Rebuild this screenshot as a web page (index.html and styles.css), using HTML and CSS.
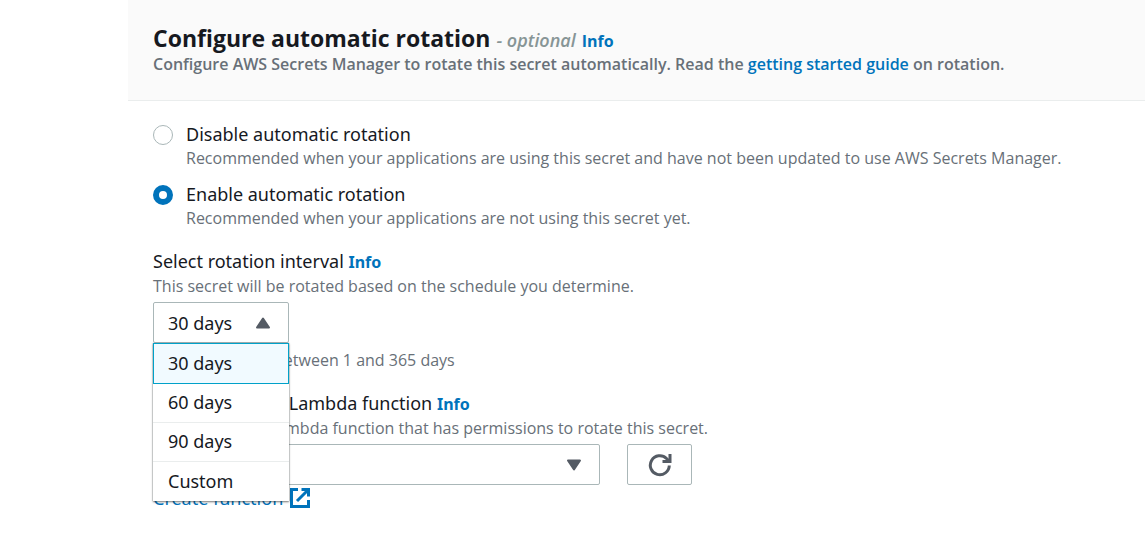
FILE: index.html
```html
<!DOCTYPE html>
<html lang="en">
<head>
<meta charset="utf-8">
<meta name="viewport" content="width=device-width, initial-scale=1">
<title>Configure automatic rotation</title>
<link rel="stylesheet" href="styles.css">
</head>
<body>
<main class="panel">
  <header class="panel-header">
    <h1 class="title">Configure automatic rotation <span class="optional">- optional</span> <a class="info" href="#">Info</a></h1>
    <p class="subtitle">Configure AWS Secrets Manager to rotate this secret automatically. Read the <a href="#">getting started guide</a> on rotation.</p>
  </header>
  <form class="panel-body">
    <div class="radios">
      <div class="choice">
        <input class="radio" type="radio" name="rotation" id="disable">
        <div>
          <label class="label" for="disable">Disable automatic rotation</label>
          <p class="hint">Recommended when your applications are using this secret and have not been updated to use AWS Secrets Manager.</p>
        </div>
      </div>
      <div class="choice">
        <input class="radio" type="radio" name="rotation" id="enable" checked>
        <div>
          <label class="label" for="enable">Enable automatic rotation</label>
          <p class="hint">Recommended when your applications are not using this secret yet.</p>
        </div>
      </div>
    </div>

    <div class="field">
      <div class="label"><label for="interval">Select rotation interval</label> <a class="info" href="#">Info</a></div>
      <p class="hint">This secret will be rotated based on the schedule you determine.</p>
      <div class="control interval">
        <select class="select" id="interval"><option>30 days</option><option>60 days</option><option>90 days</option><option>Custom</option></select>
        <svg class="caret" viewBox="0 0 16 12" aria-hidden="true"><path d="M8 1.500L14 10.500H2Z"/></svg>
        <div class="menu">
          <button class="option selected" type="button">30 days</button>
          <button class="option" type="button">60 days</button>
          <button class="option" type="button">90 days</button>
          <button class="option" type="button">Custom</button>
        </div>
      </div>
      <p class="hint">Enter a number between 1 and 365 days</p>
    </div>

    <div class="field">
      <div class="label"><label for="lambda">Choose an AWS Lambda function</label> <a class="info" href="#">Info</a></div>
      <p class="hint">Select the AWS Lambda function that has permissions to rotate this secret.</p>
      <div class="row">
        <div class="control lambda">
          <select class="select" id="lambda"><option></option></select>
          <svg class="caret" viewBox="0 0 16 12" aria-hidden="true"><path d="M8 10.500L14 1.500H2Z"/></svg>
        </div>
        <button class="refresh" type="button" aria-label="Refresh functions">
          <svg viewBox="0 0 24 24" aria-hidden="true"><path d="M21.300 12.500A9.500 9.500 0 1 1 18.500 5.500L21 8"/><path d="M22 1V8.500H14.500"/></svg>
        </button>
      </div>
      <a class="create" href="#">Create function
        <svg viewBox="0 0 20 20" aria-hidden="true"><path d="M8 1.500H1.500V18.500H18.500V12"/><path d="M11.500 1.500H18.500V8.500M18 2L7 13"/></svg>
      </a>
    </div>
  </form>
</main>
</body>
</html>
```
FILE: styles.css
```css
* { box-sizing: border-box; }
body {
  margin: 0;
  background: #fff;
  color: #16191f;
  font-family: "Open Sans", "Noto Sans", sans-serif;
  font-size: 16px;
  line-height: 22px;
}
h1, p { margin: 0; }
a { color: #0073bb; text-decoration: none; }
.panel { margin-left: 128px; }
.panel-header {
  padding: 24px 25px 25px;
  background: #fafafa;
  border-bottom: 1px solid #eaeded;
}
.title { font-size: 23px; line-height: 28px; font-weight: 700; }
.optional { color: #879596; font-size: 18px; font-style: italic; font-weight: 600; }
.info { font-size: 16px; font-weight: 700; }
.subtitle { margin-top: -2px; color: #687078; font-size: 16px; font-weight: 600; }
.panel-body {
  display: flex;
  flex-direction: column;
  gap: 19px;
  padding: 20px 25px;
}
.radios { display: flex; flex-direction: column; gap: 12px; }
.choice { display: flex; align-items: flex-start; gap: 13px; }
.radio {
  appearance: none;
  flex: none;
  width: 20px;
  height: 20px;
  margin: 4px 0 0;
  border: 1px solid #aab7b8;
  border-radius: 50%;
  background: #fff;
}
.radio:checked { border: 6px solid #0073bb; }
.label { display: block; font-family: "Noto Sans", sans-serif; font-size: 18px; line-height: 26px; }
.hint { color: #687078; }
.field { display: flex; flex-direction: column; }
.control { position: relative; margin: 5px 0 6px; }
.interval { width: 136px; }
.lambda { width: 447px; margin-bottom: 2px; }
.select {
  appearance: none;
  display: block;
  width: 100%;
  height: 41px;
  padding: 0 14px;
  border: 1px solid #aab7b8;
  border-radius: 2px;
  background: #fff;
  color: #16191f;
  font-family: "Noto Sans", sans-serif;
  font-size: 18px;
}
.caret {
  position: absolute;
  right: 18px;
  top: 15px;
  width: 16px;
  height: 12px;
  fill: #545b64;
  stroke: #545b64;
  stroke-width: 2;
  stroke-linejoin: round;
  pointer-events: none;
}
.menu {
  position: absolute;
  top: 100%;
  left: 0;
  z-index: 1;
  width: 100%;
  background: #fff;
  box-shadow: 0 1px 2px #00000080, 0 0 1px #879596;
}
.option {
  display: block;
  width: 100%;
  height: 39px;
  padding: 0 15px 2px;
  border: 0;
  border-bottom: 1px solid #eaeded;
  background: #fff;
  color: #16191f;
  font-family: "Noto Sans", sans-serif;
  font-size: 18px;
  text-align: left;
}
.option:last-child { border-bottom: 0; }
.option.selected {
  height: 41px;
  padding: 0 14px 2px;
  border: 1px solid #00a1c9;
  background: #f1faff;
}
.row { display: flex; align-items: center; gap: 27px; }
.refresh {
  display: grid;
  place-items: center;
  width: 65px;
  height: 41px;
  margin: 5px 0 2px;
  padding: 0;
  border: 1px solid #aab7b8;
  border-radius: 2px;
  background: #fff;
}
.refresh svg { width: 24px; height: 24px; fill: none; stroke: #545b64; stroke-width: 3; }
.create { display: flex; align-items: center; align-self: flex-start; gap: 7px; font-family: "Noto Sans", sans-serif; font-size: 18px; }
.create svg { width: 20px; height: 20px; fill: none; stroke: #0073bb; stroke-width: 3; }
```
